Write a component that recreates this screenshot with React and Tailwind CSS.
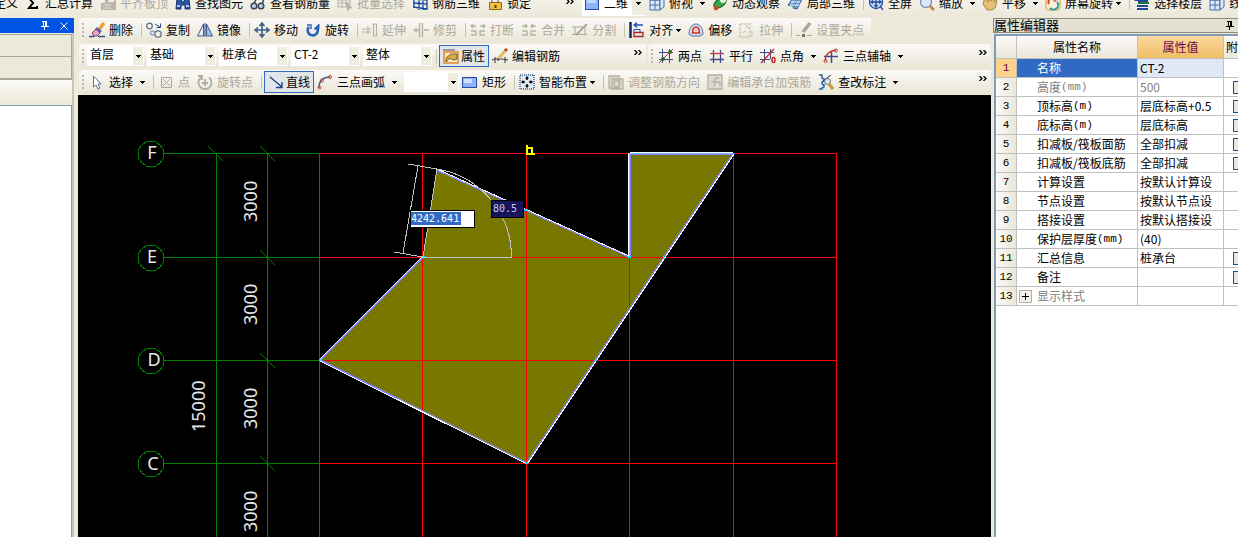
/**
 * Ventana principal del editor de losas de cimentación
 * Barras de herramientas, lienzo CAD y editor de propiedades
 */

import clsx from 'clsx'

// Dibujos de 16x16 para los botones de las barras
const ICONOS = {
  suma: <path d="M12 5V3H4l4 5-4 5h8v-2" fill="none" stroke="#000" strokeWidth="2" />,
  borde: (
    <g fill="#b9b6a8">
      <path d="M1 8h4V4h4v3h5V3h2v12H1z" />
      <path d="M3 10h8M3 13h8M11 1L8 8" stroke="#e8e5d8" />
    </g>
  ),
  prismaticos: (
    <g fill="#2f55a0" stroke="#16306e">
      <path d="M2 4l2-2h2l1 5h2l1-5h2l2 2 1 10h-5v-4H6v4H1z" />
      <path d="M2 11h3M11 11h3" stroke="#a9c4f2" strokeWidth="2" />
    </g>
  ),
  gafas: (
    <g fill="#b8d4ee" stroke="#3a4350" strokeWidth="1.5">
      <path d="M3 10l4-7M12 10l2-7-3-1" fill="none" />
      <circle cx="4" cy="11" r="2.8" />
      <circle cx="11" cy="11" r="2.8" />
    </g>
  ),
  lote: (
    <g fill="none" stroke="#b5b2a5">
      <path d="M1 2h12v10H1zM1 5h12M1 8h12M5 2v10M9 2v10" />
      <path d="M9 7l6 6h-3l-1 3z" fill="#b5b2a5" />
    </g>
  ),
  malla: (
    <g fill="none" stroke="#17479e" strokeWidth="1.3">
      <path d="M2 1v12M7 1v14M11 1v14M15 1v14M1 4l14 1M1 8l14 1M1 12l14 2" />
    </g>
  ),
  candado: (
    <g stroke="#93660d">
      <path d="M5 8V5a3 3 0 016 0v3" fill="none" stroke="#8b8b8b" strokeWidth="1.6" />
      <path d="M2.500 7.500h12v7h-12z" fill="#f3bf45" />
      <path d="M8.500 10v3" stroke="#5a3a00" strokeWidth="2" />
    </g>
  ),
  plano: (
    <g>
      <rect x="1.5" y="2.500" width="13" height="12" fill="#8fb4fb" stroke="#2b4fa8" />
      <path d="M3 4h9v4H3z" fill="#c6dafd" />
    </g>
  ),
  cubo: (
    <g fill="#dbe8f8" stroke="#4a6fa8">
      <path d="M1 5h10v10H1z" />
      <path d="M1 5l4-3h10v10l-4 3V5zM11 5l4-3M1 10h10M6 5v10" />
    </g>
  ),
  orbita: (
    <g>
      <ellipse cx="8" cy="8" rx="7" ry="4" fill="#35a852" stroke="#0f6a2b" transform="rotate(-35 8 8)" />
      <circle cx="11" cy="5" r="3" fill="#e9f6d8" />
      <circle cx="4" cy="13" r="2.4" fill="#d6432c" />
    </g>
  ),
  local: (
    <g fill="#6fa3d8" stroke="#2a5d9c">
      <path d="M1 10l5-7h4l-4 8zM6 13l5-9h4l-5 10z" />
      <path d="M4 7h9M3 10h9" stroke="#fff" />
    </g>
  ),
  pantalla: (
    <g fill="none" stroke="#234f9c" strokeWidth="1.3">
      <circle cx="8" cy="7" r="6.500" fill="#c7dbf5" />
      <path d="M8 2v10M3 7h10M6.500 4L8 2l1.500 2M6.500 10L8 12l1.500-2M5 5.500L3 7l2 1.500M11 5.500L13 7l-2 1.500M12 11l3 4" />
    </g>
  ),
  lupa: (
    <g>
      <circle cx="7" cy="7" r="5.500" fill="#dbe9fa" stroke="#7896bd" strokeWidth="1.4" />
      <path d="M11 11l4 4" stroke="#c98a3c" strokeWidth="3" />
    </g>
  ),
  mano: (
    <path
      d="M2 5l2-1 2 3V2h2l1 4 1-4h2v5l2-2 1 1-2 7-3 2H5L1 9z"
      fill="#e6bf70"
      stroke="#8f7340"
      strokeWidth=".8"
    />
  ),
  girarPantalla: (
    <g fill="none">
      <rect x="1" y="1" width="14" height="14" rx="2" fill="#f6f2da" stroke="#e39a2f" />
      <path d="M4 9a4 4 0 017-4" stroke="#d8362a" strokeWidth="2" />
      <path d="M12 7a4 4 0 01-7 6" stroke="#2c9e9b" strokeWidth="2" />
      <path d="M11 2v4H8" stroke="#d8362a" />
    </g>
  ),
  pisos: (
    <g>
      <path d="M4 4h11M4 8h11" stroke="#167a38" strokeWidth="2" />
      <path d="M4 6h10M3 11h11M3 14h11" stroke="#1c4a97" strokeWidth="2" />
      <path d="M0 6l4-4v4z" fill="#1c4a97" />
    </g>
  ),
  borrar: (
    <g>
      <path d="M9 9l6-8" stroke="#e5a33a" strokeWidth="3.500" />
      <path d="M7 6l5 4" stroke="#4765a8" strokeWidth="2.500" />
      <path d="M3 11l4-4 4 4-3 3H5z" fill="#e9a2bd" stroke="#8c3c7a" />
      <path d="M0 14.500h5M9 14.500h7" stroke="#2b4f83" strokeWidth="1.500" />
    </g>
  ),
  copiar: (
    <g fill="none" stroke="#59718f" strokeWidth="1.3">
      <circle cx="3.500" cy="4" r="2.800" />
      <circle cx="12" cy="12" r="3.200" />
      <circle cx="6.500" cy="11" r="2" stroke="#8aa0bb" />
      <path d="M9 2l5 3M14.500 1.500v4h-4" stroke="#2b4f93" strokeWidth="1" />
    </g>
  ),
  espejo: (
    <g fill="none" stroke="#39598f">
      <path d="M6.500 2v12h-6z" />
      <path d="M9.500 2v12h6z" fill="#9fc0ea" />
      <path d="M8 1v14" stroke="#1f3e86" />
    </g>
  ),
  mover: (
    <path
      d="M8 1v14M1 8h14M5.500 4L8 1l2.500 3M5.500 12L8 15l2.500-3M4 5.500L1 8l3 2.500M12 5.500L15 8l-3 2.500"
      fill="none"
      stroke="#3d5f8a"
      strokeWidth="1.6"
    />
  ),
  rotar: (
    <g fill="none" stroke="#2a62b8" strokeWidth="2.800">
      <path d="M4 5a5 5 0 107.500 0" />
      <path d="M14 2v5H9z" fill="#2a62b8" strokeWidth="1" />
      <path d="M2 3h4v4" strokeWidth="1.400" />
    </g>
  ),
  extender: <path d="M0 7h9M0 10h9M6 4v8M11.500 2h3v12h-3z" fill="none" stroke="#b5b2a5" strokeWidth="1.200" />,
  recortar: <path d="M0 8h6M11 8h5M6.500 1v14M9.500 1v14M3 5.500v5" fill="none" stroke="#b5b2a5" strokeWidth="1.400" />,
  romper: (
    <path d="M1 4h5M10 4h5M3 2L1 4l2 2M13 2l2 2-2 2M1 9h5v4H1M15 9h-5v4h5" fill="none" stroke="#b5b2a5" strokeWidth="1.300" />
  ),
  unir: (
    <path d="M1 4h5M10 4h5M4 2l2 2-2 2M12 2l-2 2 2 2M1 9h5v4H1M15 9h-5v4h5" fill="none" stroke="#b5b2a5" strokeWidth="1.300" />
  ),
  dividir: (
    <g fill="none" stroke="#aaa798">
      <path d="M0 5h11M0 12.500h15M3 5v7M13 5v7" />
      <path d="M4 13l11-11" strokeWidth="2" />
    </g>
  ),
  alinear: (
    <g fill="none">
      <path d="M1.500 0v16" stroke="#10265c" strokeWidth="2.500" />
      <path d="M5 3h9M8 0.500L5 3l3 2.500" stroke="#2350b8" strokeWidth="1.300" />
      <path d="M5 7.500h6v3H5z" stroke="#2350b8" />
      <path d="M5 10.500h9v4H5z" stroke="#a5282b" strokeWidth="1.300" />
    </g>
  ),
  desfase: (
    <g stroke="#c23b31">
      <path d="M1 12c0-5 3-10 7-10s7 5 7 10l-3 2H4z" fill="#d5e2f2" stroke="#4c6e9c" />
      <path d="M4.500 11c0-3 1-6 3.500-6s3.500 3 3.500 6z" fill="#f7c7c0" strokeWidth="1.500" />
    </g>
  ),
  estirar: <path d="M1 2h7v4h3v9H1zM9 2h3v2M13 9v6M4 11l3-3" fill="none" stroke="#bab7aa" strokeDasharray="3 1" />,
  pinza: (
    <g stroke="#aaa798">
      <path d="M7 10l7-9" strokeWidth="3.500" />
      <path d="M0 13.500h4M11 13.500h5" />
      <path d="M6 12h3v3H6z" fill="#77756b" stroke="none" />
    </g>
  ),
  propiedades: (
    <g>
      <rect x="1" y="4" width="14" height="11" fill="#fde7c2" stroke="#e58a2c" strokeWidth="1.500" />
      <path d="M0 2h12" stroke="#9b9b9b" strokeWidth="2" />
      <path d="M3 10l5-4h6v5l-4 1-3-2-4 4z" fill="#d9b03f" stroke="#4c4a30" strokeWidth=".8" />
    </g>
  ),
  lapiz: (
    <g>
      <path d="M0 12c4-2 10-1 16 0M3 9v6M13 9v6" stroke="#333" fill="none" />
      <path d="M6 11l7-8" stroke="#dfbf58" strokeWidth="3" />
      <path d="M13 3l2-2" stroke="#c2402d" strokeWidth="3" />
      <path d="M5 13l1-3 2 2z" fill="#333" />
    </g>
  ),
  dosPuntos: (
    <g>
      <path d="M4.500 1v14M11.500 1v14M1 4.500h14M1 11.500h14" stroke="#414a8c" />
      <path d="M1 15L15 1" stroke="#cc2a22" />
      <circle cx="5" cy="11" r="2" fill="#2e6e26" />
      <circle cx="12" cy="4" r="2" fill="#2e6e26" />
    </g>
  ),
  paralela: (
    <g>
      <path d="M4.500 2v13M11.500 2v13M1 11.500h14" stroke="#414a8c" strokeWidth="1.300" />
      <path d="M1 5.500h14" stroke="#c83a3a" strokeWidth="1.300" />
    </g>
  ),
  puntoAngulo: (
    <g fill="none">
      <path d="M4.500 1v14M10.500 1v10M0 4.500h14M0 11.500h10" stroke="#414a8c" />
      <path d="M1 15L14 1" stroke="#cc2a22" strokeWidth="1.300" />
      <ellipse cx="13.500" cy="12" rx="1.500" ry="2.500" stroke="#cc2a22" strokeWidth="1.500" />
    </g>
  ),
  ejeAuxiliar: (
    <g fill="none">
      <path d="M8.500 3v12M1 8.500h14" stroke="#414a8c" strokeWidth="1.500" />
      <path d="M2 13c0-7 4-10 11-11" stroke="#d13a30" strokeWidth="1.300" />
      <circle cx="2.500" cy="13" r="1.500" stroke="#d13a30" />
      <circle cx="13" cy="2.500" r="1.500" stroke="#d13a30" />
    </g>
  ),
  cursor: <path d="M4.500 2v11l2.500-2L9 15l2-1-2-4h3z" fill="#fff" stroke="#5b7490" />,
  punto: (
    <g fill="none" stroke="#aaa798">
      <path d="M3.500 3.500h10v10h-10z" />
      <path d="M5 5l7 7M12 5l-7 7" />
    </g>
  ),
  girarPunto: (
    <g fill="none" stroke="#b0ada0" strokeWidth="1.800">
      <path d="M4 3.500a6.500 6.500 0 108 0M1 2h4v4M8 5v7M5 9h6" />
    </g>
  ),
  linea: <path d="M2 3l12 10M14 8v5.500H8" fill="none" stroke="#1d3f7d" strokeWidth="1.300" />,
  arco: (
    <g fill="none" stroke="#d0442f">
      <path d="M2 14C2 7 6 3 13 3" stroke="#3460a8" strokeWidth="1.500" />
      <circle cx="2.500" cy="13.500" r="1.500" />
      <circle cx="5" cy="6.500" r="1.500" />
      <circle cx="13" cy="3" r="1.500" />
    </g>
  ),
  rectangulo: (
    <g>
      <rect x=".5" y="3.500" width="14" height="10" fill="#8fb2fa" stroke="#2a4aa5" />
      <path d="M2 5h8v4H2z" fill="#d2e1fd" />
    </g>
  ),
  disponer: (
    <g>
      <rect x="1" y="1" width="14" height="14" fill="#dfeaf6" stroke="#38628f" strokeWidth="1.500" strokeDasharray="1 1" />
      <path d="M8 3v3M8 10v3M3 8h3M10 8h3" stroke="#000" strokeWidth="1.500" />
      <path d="M6 4.500L8 2l2 2.500zM6 11.500L8 14l2-2.500zM4.500 6L2 8l2.500 2zM11.500 6L14 8l-2.500 2z" />
    </g>
  ),
  direccion: (
    <g fill="none" stroke="#b5b2a5" strokeWidth="1.300">
      <path d="M1 2h10v12H1zM4 5h11v10H4z" fill="#dedbd0" />
      <path d="M6 7v3a3 3 0 006 0V7z" />
    </g>
  ),
  refuerzo: (
    <g fill="none" stroke="#b5b2a5" strokeWidth="1.300">
      <path d="M1 1h14v14H1z" fill="#dedbd0" />
      <path d="M12 4H9c-2 0-1 3-1 5s0 3-2 3M4 8h9v4" />
    </g>
  ),
  anotacion: (
    <g fill="none">
      <path d="M1 1h3v3l2 1v2L4 8v2l2 1v2l-2 1v1H1" stroke="#2467ad" strokeWidth="1.500" />
      <path d="M5 7l8-6" stroke="#333" />
      <circle cx="9.500" cy="7.500" r="3" fill="#d9e9f5" stroke="#666" />
      <path d="M11 10l4 5" stroke="#d2953e" strokeWidth="3" />
    </g>
  ),
}

const FILAS = [
  { nombre: '名称', valor: 'CT-2' },
  { nombre: '高度', unidad: '(mm)', valor: '500', casilla: true, tenue: true },
  { nombre: '顶标高', unidad: '(m)', valor: '层底标高+0.5', casilla: true },
  { nombre: '底标高', unidad: '(m)', valor: '层底标高', casilla: true },
  { nombre: '扣减板/筏板面筋', valor: '全部扣减', casilla: true },
  { nombre: '扣减板/筏板底筋', valor: '全部扣减', casilla: true },
  { nombre: '计算设置', valor: '按默认计算设' },
  { nombre: '节点设置', valor: '按默认节点设' },
  { nombre: '搭接设置', valor: '按默认搭接设' },
  { nombre: '保护层厚度', unidad: '(mm)', valor: '(40)' },
  { nombre: '汇总信息', valor: '桩承台', casilla: true },
  { nombre: '备注', valor: '', casilla: true },
  { nombre: '显示样式', valor: '', tenue: true, grupo: true },
]

const EJES_X = [319, 422, 526, 629, 733, 836]
const EJES_Y = [
  { letra: 'F', y: 153 },
  { letra: 'E', y: 257 },
  { letra: 'D', y: 360 },
  { letra: 'C', y: 463 },
]

function Flecha({ className }) {
  return (
    <svg viewBox="0 0 5 3" className={clsx('h-[3px] w-[5px] shrink-0', className)} shapeRendering="crispEdges">
      <path d="M0 0h5L2.500 3z" />
    </svg>
  )
}

function Icono({ nombre }) {
  return (
    <svg viewBox="0 0 16 16" className="h-4 w-4 shrink-0" aria-hidden="true">
      {ICONOS[nombre]}
    </svg>
  )
}

// menu: "junto" pega la flecha al texto, "aparte" la separa
function Boton({ icono, children, menu, inactivo, activo }) {
  return (
    <button
      type="button"
      disabled={inactivo}
      className={clsx(
        'flex shrink-0 items-center whitespace-nowrap',
        inactivo && 'text-[#aca899]',
        activo
          ? '-ml-0.5 mr-[3px] h-[22px] gap-0.5 border border-[#316ac5] bg-[#e1e6e8] px-[3px]'
          : 'mr-[7px] h-5 gap-1'
      )}
    >
      {icono && <Icono nombre={icono} />}
      <span className="flex items-center">
        {children}
        {menu && <Flecha className={menu === 'junto' ? 'ml-[3px]' : 'ml-[7px]'} />}
      </span>
    </button>
  )
}

function Separador() {
  return <span className="ml-px mr-1 h-[14px] w-px shrink-0 bg-[#c5c2b2]" />
}

function Agarre() {
  return (
    <span className="ml-[3px] mr-[5px] flex shrink-0 flex-col gap-0.5">
      <i className="h-0.5 w-0.5 bg-[#bdbaab]" />
      <i className="h-0.5 w-0.5 bg-[#bdbaab]" />
      <i className="h-0.5 w-0.5 bg-[#bdbaab]" />
      <i className="h-0.5 w-0.5 bg-[#bdbaab]" />
    </span>
  )
}

function Mas() {
  return (
    <button type="button" aria-label="更多" className="ml-auto mr-1 h-4 shrink-0 self-start">
      <svg viewBox="0 0 8 5" className="h-[5px] w-2" fill="none" stroke="#000" strokeWidth="1.300">
        <path d="M.5 0L3 2.500.5 5M4.500 0L7 2.500 4.500 5" />
      </svg>
    </button>
  )
}

function Desplegable({ valor, etiqueta, className }) {
  return (
    <span className={clsx('relative mr-[3px] flex h-5 shrink-0 bg-white', className)}>
      <select aria-label={etiqueta} className="w-full appearance-none pb-1 pl-[3px] outline-none">
        <option>{valor}</option>
      </select>
      <span className="pointer-events-none absolute inset-y-px right-px flex w-[10px] items-center justify-center bg-[#efede0]">
        <Flecha />
      </span>
    </span>
  )
}

function Barra({ children, className }) {
  return (
    <div
      className={clsx(
        'flex h-6 items-center rounded-l-sm bg-linear-to-b from-[#fbfaf7] to-[#e9e6d7]',
        className
      )}
    >
      {children}
    </div>
  )
}

function BarraSuperior() {
  return (
    <div className="-mt-3 flex h-[30px] shrink-0 items-center overflow-hidden bg-linear-to-b from-[#f8f7f2] to-[#ebe8d9]">
      <div className="flex w-[578px] shrink-0 items-center">
        <span className="-ml-1.5 flex">
          <Boton>定义</Boton>
        </span>
        <Boton icono="suma">汇总计算</Boton>
        <Boton icono="borde" inactivo>平齐板顶</Boton>
        <Boton icono="prismaticos">查找图元</Boton>
        <Boton icono="gafas">查看钢筋量</Boton>
        <Boton icono="lote" inactivo>批量选择</Boton>
        <Boton icono="malla">钢筋三维</Boton>
        <Boton icono="candado">锁定</Boton>
        <Mas />
      </div>
      <div className="flex items-center pl-1">
        <button type="button" className="mr-1 flex h-[26px] shrink-0 items-center gap-1 bg-white pl-0.5">
          <Icono nombre="plano" />
          <span className="flex items-center">
            二维
            <span className="ml-1 flex h-6 w-[13px] items-center justify-center bg-[#efede0]">
              <Flecha />
            </span>
          </span>
        </button>
        <Boton icono="cubo" menu="aparte">俯视</Boton>
        <Boton icono="orbita">动态观察</Boton>
        <Boton icono="local">局部三维</Boton>
        <Separador />
        <Boton icono="pantalla">全屏</Boton>
        <Boton icono="lupa" menu="aparte">缩放</Boton>
        <Boton icono="mano" menu="aparte">平移</Boton>
        <Boton icono="girarPantalla" menu="junto">屏幕旋转</Boton>
        <Separador />
        <Boton icono="pisos">选择楼层</Boton>
        <Boton icono="cubo">线框</Boton>
      </div>
    </div>
  )
}

function Chincheta({ className }) {
  return (
    <svg viewBox="0 0 8 9" className={clsx('h-[9px] w-2', className)} fill="none" stroke="currentColor" shapeRendering="crispEdges">
      <path d="M2.500 0v5M1 .5h5M5.500 0v5M4.500 0v5M0 5.500h8M3.500 6v3" />
    </svg>
  )
}

function PanelIzquierdo() {
  return (
    <aside className="flex w-[78px] shrink-0 flex-col bg-[#efebdc] pr-1">
      <div className="flex h-[15px] items-center justify-end gap-[11px] bg-[#0055e5] pr-1.5 text-white">
        <Chincheta />
        <svg viewBox="0 0 8 8" className="h-2 w-2" stroke="currentColor">
          <path d="M.5.5l7 7M7.500.5l-7 7" />
        </svg>
      </div>
      <div className="flex flex-1 flex-col border-r-2 border-[#c9c6b8] pt-px">
        <div className="h-[23px] border-y border-r border-[#aca899] bg-[#ece9d8]" />
        <div className="h-[23px] border-b-2 border-r border-[#aca899] bg-[#ece9d8]" />
        <div className="h-[25px] bg-linear-to-b from-[#fbfaf7] to-[#ece9d8]" />
        <div className="flex-1 border-r border-t border-[#7f9db9] bg-white" />
      </div>
    </aside>
  )
}

function Barras() {
  return (
    <div className="flex flex-col gap-0.5 pb-px pl-px">
      <Barra className="w-fit">
        <Agarre />
        <Boton icono="borrar">删除</Boton>
        <Separador />
        <Boton icono="copiar">复制</Boton>
        <Boton icono="espejo">镜像</Boton>
        <Separador />
        <Boton icono="mover">移动</Boton>
        <Boton icono="rotar">旋转</Boton>
        <Separador />
        <Boton icono="extender" inactivo>延伸</Boton>
        <Boton icono="recortar" inactivo>修剪</Boton>
        <Separador />
        <Boton icono="romper" inactivo>打断</Boton>
        <Boton icono="unir" inactivo>合并</Boton>
        <Boton icono="dividir" inactivo>分割</Boton>
        <Separador />
        <Boton icono="alinear" menu="junto">对齐</Boton>
        <Boton icono="desfase">偏移</Boton>
        <Boton icono="estirar" inactivo>拉伸</Boton>
        <Separador />
        <Boton icono="pinza" inactivo>设置夹点</Boton>
      </Barra>

      <div className="flex gap-0.5">
        <Barra className="w-[567px] shrink-0">
          <Agarre />
          <Desplegable valor="首层" etiqueta="楼层" className="-ml-0.5 w-[57px]" />
          <Desplegable valor="基础" etiqueta="构件类别" className="w-[69px]" />
          <Desplegable valor="桩承台" etiqueta="构件类型" className="w-[69px]" />
          <Desplegable valor="CT-2" etiqueta="构件" className="w-[69px]" />
          <Desplegable valor="整体" etiqueta="单元" className="w-[69px]" />
          <Separador />
          <Boton icono="propiedades" activo>属性</Boton>
          <Boton icono="lapiz">编辑钢筋</Boton>
          <Mas />
        </Barra>
        <Barra className="min-w-0 flex-1">
          <Agarre />
          <Boton icono="dosPuntos">两点</Boton>
          <Boton icono="paralela">平行</Boton>
          <Boton icono="puntoAngulo" menu="aparte">点角</Boton>
          <Boton icono="ejeAuxiliar" menu="aparte">三点辅轴</Boton>
          <Mas />
        </Barra>
      </div>

      <Barra>
        <Agarre />
        <Boton icono="cursor" menu="aparte">选择</Boton>
        <Separador />
        <Boton icono="punto" inactivo>点</Boton>
        <Boton icono="girarPunto" inactivo>旋转点</Boton>
        <Separador />
        <Boton icono="linea" activo>直线</Boton>
        <Boton icono="arco" menu="aparte">三点画弧</Boton>
        <Desplegable valor="" etiqueta="画弧方式" className="w-[55px]" />
        <Boton icono="rectangulo">矩形</Boton>
        <Separador />
        <Boton icono="disponer" menu="junto">智能布置</Boton>
        <Separador />
        <Boton icono="direccion" inactivo>调整钢筋方向</Boton>
        <Boton icono="refuerzo" inactivo>编辑承台加强筋</Boton>
        <Boton icono="anotacion" menu="aparte">查改标注</Boton>
        <Mas />
      </Barra>
    </div>
  )
}

// Lienzo con la retícula de ejes y la losa en curso
function Lienzo() {
  return (
    <div className="relative flex-1 overflow-hidden bg-black">
      <svg viewBox="78 95 913 442" className="absolute left-0 top-0 h-[442px] w-[913px]" fill="none">
        <g shapeRendering="crispEdges">
          <path d="M437 169L630 256V153H733L527 463 320 360l103-103z" fill="#787800" />

          {EJES_Y.map(({ letra, y }) => (
            <g key={letra}>
              <path d={`M164 ${y + 0.5}H319`} stroke="#008000" />
              <path d={`M319 ${y + 0.5}H837`} stroke="#f00" />
              <path d={`M260 ${y - 7}l15 15`} stroke="#008000" />
              <path
                d={`M151 ${y - 12}l5 1 4 3 3 4 1 5-1 5-3 4-4 3-5 1-5-1-4-3-3-4-1-5 1-5 3-4 4-3z`}
                stroke="#008000"
              />
            </g>
          ))}
          <path d="M208 146l15 15M216.500 153v384M267.500 153v384" stroke="#008000" />
          {EJES_X.map((x) => (
            <path key={x} d={`M${x + 0.5} 153V537`} stroke="#f00" />
          ))}

          {/* Contorno: trazo interior violeta y exterior blanco */}
          <path d="M437 170L630 257V154H733L527 463 320 360l103-103" stroke="#8080ff" strokeWidth="2" />
          <path d="M437 169L629 256M628.500 256V153M630 152.500H733M734 154L528 463M527 464L320 361M319 360L423 256" stroke="#fff" />
          <path d="M629.500 256V153M630 153.500H733" stroke="#80c0ff" />
          <path d="M319 360h3M422 257h3M526 210h2M628 257h3M525 463h3M595 360h2M663 257h2" stroke="#00e5ff" strokeWidth="2" />

          {/* Cotas dinámicas */}
          <path
            d="M423 257.500H512M511.500 257a89 89 0 00-74-88M423 257l14-88M408 164l29 5M394 252l29 5M418 166l-15 87"
            stroke="#c0c0c0"
          />
          <path d="M526.500 145v9M526 153.500h9M528 147.500h3M531.500 147v6" stroke="#ff0" strokeWidth="2" />
        </g>

        <g fill="#e8e8e8" fontFamily="'Noto Sans', sans-serif" fontSize="18">
          <text x="152" y="159" textAnchor="middle">F</text>
          <text x="152" y="263" textAnchor="middle">E</text>
          <text x="154" y="366" textAnchor="middle">D</text>
          <text x="153" y="470" textAnchor="middle">C</text>
          <text transform="translate(257 222) rotate(-90)">3000</text>
          <text transform="translate(257 325) rotate(-90)">3000</text>
          <text transform="translate(257 429) rotate(-90)">3000</text>
          <text transform="translate(257 532) rotate(-90)">3000</text>
          <text transform="translate(205 432) rotate(-90)">15000</text>
        </g>
      </svg>

      <div className="absolute left-[332px] top-[115px] h-[18px] w-[65px] border border-black bg-white pb-0.5 pt-px">
        <input
          aria-label="长度"
          defaultValue="4242.641"
          className="block h-[13px] w-full bg-linear-to-r from-[#316ac5] from-[50px] to-white to-[50px] font-['DejaVu_Sans_Mono',monospace] text-[10px] leading-none text-white outline-none"
        />
      </div>
      <div className="absolute left-[413px] top-[105px] h-[18px] w-[33px] border border-black bg-[#17145c] pl-px font-['DejaVu_Sans_Mono',monospace] text-[10px] leading-[15px] text-[#c8c8e0]">
        80.5
      </div>
    </div>
  )
}

function EditorPropiedades() {
  return (
    <aside className="ml-0.5 flex w-[245px] shrink-0 flex-col overflow-hidden">
      <div className="flex h-[15px] shrink-0 items-center justify-between border-y border-l border-[#8d8b80] bg-[#e4e1d2] pr-1">
        <h2 className="pb-0.5 text-[13px] leading-none">属性编辑器</h2>
        <Chincheta />
      </div>
      <div className="ml-px mt-px flex-1 overflow-hidden border-l-2 border-t-2 border-[#7f9db9] bg-white">
        <table className="w-[270px] table-fixed border-separate border-spacing-0 whitespace-nowrap">
          <colgroup>
            <col className="w-[21px]" />
            <col className="w-[121px]" />
            <col className="w-[86px]" />
            <col className="w-[42px]" />
          </colgroup>
          <thead>
            <tr className="h-[23px] bg-linear-to-b from-[#fbfaf7] to-[#eae7d8] [&>th]:border-b [&>th]:border-r [&>th]:border-[#c0c0c0] [&>th]:p-0 [&>th]:font-normal">
              <th />
              <th>属性名称</th>
              <th className="bg-linear-to-b from-[#fad9a0] to-[#f0bd62] text-[#6b0a4c]">属性值</th>
              <th className="text-left">
                <span className="pl-0.5">附加</span>
              </th>
            </tr>
          </thead>
          <tbody>
            {FILAS.map((fila, i) => (
              <tr
                key={fila.nombre}
                className={clsx(
                  'h-[19px] [&>td]:overflow-hidden [&>td]:border-b [&>td]:border-r [&>td]:border-[#c0c0c0] [&>td]:p-0 [&>td]:leading-none',
                  fila.tenue && 'text-[#808080]'
                )}
              >
                <td
                  className={clsx(
                    "text-center font-['Liberation_Mono',monospace] text-[11px]",
                    i === 0 ? 'bg-[#fdd28b] text-[#6b0a4c]' : 'bg-linear-to-r from-[#fbfaf7] to-[#eae7d8] text-black'
                  )}
                >
                  {i + 1}
                </td>
                <td className={clsx(i === 0 && 'bg-[#316ac5] text-white')}>
                  <span className="flex items-center">
                    <span className="flex w-5 shrink-0 pl-0.5">
                      {fila.grupo && (
                        <button
                          type="button"
                          aria-label="展开"
                          className="flex h-[13px] w-[13px] items-center justify-center border border-[#b5b2a5] bg-[#f4f2ea]"
                        >
                          <svg viewBox="0 0 7 7" className="h-[7px] w-[7px]" stroke="#000">
                            <path d="M0 3.500h7M3.500 0v7" />
                          </svg>
                        </button>
                      )}
                    </span>
                    {fila.nombre}
                    {fila.unidad && (
                      <span className="font-['Liberation_Mono',monospace] text-[11px]">{fila.unidad}</span>
                    )}
                  </span>
                </td>
                <td className={clsx(i === 0 && 'bg-[#dfe8f5]')}>
                  <span className="pl-0.5">{fila.valor}</span>
                </td>
                <td>
                  {fila.casilla && (
                    <input
                      type="checkbox"
                      aria-label={`附加 ${fila.nombre}`}
                      className="ml-[9px] block h-[13px] w-[13px] appearance-none border border-[#1d5087] bg-[#e8e8e4]"
                    />
                  )}
                </td>
              </tr>
            ))}
          </tbody>
        </table>
      </div>
    </aside>
  )
}

export default function App() {
  return (
    <div className="flex h-screen flex-col overflow-hidden bg-[#ece9d8] font-['Noto_Sans_CJK_SC',sans-serif] text-xs leading-4 text-black">
      <BarraSuperior />
      <div className="flex min-h-0 flex-1">
        <PanelIzquierdo />
        <main className="flex min-w-0 flex-1 flex-col">
          <Barras />
          <Lienzo />
        </main>
        <EditorPropiedades />
      </div>
    </div>
  )
}
